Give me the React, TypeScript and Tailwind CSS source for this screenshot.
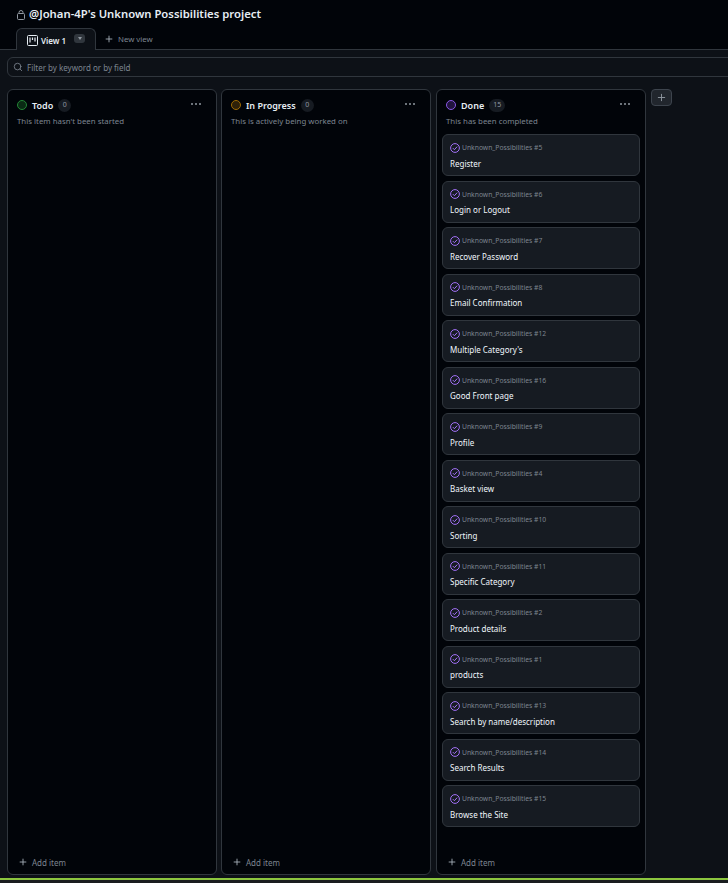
import { Plus, Search } from "lucide-react";

interface IColumn {
  title: string;
  count: number;
  note: string;
  ring: string;
  fill: string;
}

const items = [
  { num: 5, title: "Register" },
  { num: 6, title: "Login or Logout" },
  { num: 7, title: "Recover Password" },
  { num: 8, title: "Email Confirmation" },
  { num: 12, title: "Multiple Category's" },
  { num: 16, title: "Good Front page" },
  { num: 9, title: "Profile" },
  { num: 4, title: "Basket view" },
  { num: 10, title: "Sorting" },
  { num: 11, title: "Specific Category" },
  { num: 2, title: "Product details" },
  { num: 1, title: "products" },
  { num: 13, title: "Search by name/description" },
  { num: 14, title: "Search Results" },
  { num: 15, title: "Browse the Site" },
];

const columns: IColumn[] = [
  { title: "Todo", count: 0, note: "This item hasn't been started", ring: "border-[#238636]", fill: "bg-[#0a2a14]" },
  { title: "In Progress", count: 0, note: "This is actively being worked on", ring: "border-[#9e6a03]", fill: "bg-[#2e2109]" },
  { title: "Done", count: 15, note: "This has been completed", ring: "border-[#8957e5]", fill: "bg-[#21143f]" },
];

const Dots = () => (
  <svg width="12" height="4" viewBox="0 0 12 4" className="text-[#9198a1]">
    <circle cx="2" cy="2" r="1" fill="currentColor" />
    <circle cx="6" cy="2" r="1" fill="currentColor" />
    <circle cx="10" cy="2" r="1" fill="currentColor" />
  </svg>
);

const DoneIcon = () => (
  <svg width="10" height="10" viewBox="0 0 10 10" fill="none" className="shrink-0 -translate-y-px">
    <circle cx="5" cy="5" r="4.4" stroke="#a371f7" strokeWidth="1" />
    <path d="M2.8 5.1 4.4 6.7 7.2 3.6" stroke="#a371f7" strokeWidth="1" />
  </svg>
);

const BoardIcon = () => (
  <svg width="11" height="11" viewBox="0 0 11 11" fill="none" className="shrink-0">
    <rect x="0.5" y="0.5" width="10" height="10" rx="1" stroke="#e6edf3" />
    <path d="M3 2.5v5M5.5 2.5v2.5M8 2.5v4" stroke="#e6edf3" strokeWidth="1.2" />
  </svg>
);

const Card = ({ num, title }: { num: number; title: string }) => (
  <div className="h-[42px] shrink-0 rounded-md border border-[#30363d] bg-[#161b22] pl-[7px] pt-[7px]">
    <div className="flex h-[13px] items-center gap-[2px] text-[6.75px] text-[#7d8590]">
      <DoneIcon />
      <span>Unknown_Possibilities #{num}</span>
    </div>
    <div className="mt-[1.5px] text-[8px] leading-[13px] font-normal text-[#f0f6fc]">{title}</div>
  </div>
);

const Column = ({ col, cards }: { col: IColumn; cards: boolean }) => (
  <div className={`flex h-[786px] w-[210px] shrink-0 flex-col rounded-md border border-[#30363d] bg-[#010409] ${cards ? "ml-px" : ""}`}>
    <div className="flex h-[44px] shrink-0 flex-col px-[9px] pt-[8px]">
      <div className="flex h-[14px] items-center">
        <span className={`h-[10px] w-[10px] rounded-full border-[1.5px] ${col.ring} ${col.fill}`} />
        <span className="ml-[5px] translate-y-px text-[9px] font-semibold text-[#e6edf3]">{col.title}</span>
        <span className="ml-[5px] flex h-[13px] min-w-[13px] items-center justify-center rounded-full bg-[#161b22] px-[4px] text-[7px] text-[#9198a1]">
          {col.count}
        </span>
        <span className="mr-[5px] ml-auto -translate-y-[1px]"><Dots /></span>
      </div>
      <p className="mt-[3px] text-[7.85px] leading-[12px] text-[#7d8590]">{col.note}</p>
    </div>
    <div className="flex flex-1 flex-col gap-[4.5px] px-[5px]">
      {cards && items.map((it) => <Card key={it.num} num={it.num} title={it.title} />)}
    </div>
    <div className="flex h-[26px] shrink-0 items-center gap-[4px] px-[10px] pt-[4px] text-[8px] text-[#7d8590]">
      <Plus size={10} className="-translate-y-px text-[#b1bac4]" />
      <span>Add item</span>
    </div>
  </div>
);

export default function App() {
  return (
    <div className="flex h-[883px] w-[728px] flex-col overflow-hidden bg-[#0d1117] font-['Noto_Sans',sans-serif]">
      <div className="h-[50px] shrink-0 border-b border-[#30363d] bg-[#010409]">
        <div className="flex h-[29px] items-center pl-[17px]">
          <svg width="8" height="10" viewBox="0 0 8 10" fill="none">
            <rect x="0.5" y="3.5" width="7" height="6" rx="1" stroke="#9198a1" />
            <path d="M2 3.5V2.5a2 2 0 0 1 4 0v1" stroke="#9198a1" />
          </svg>
          <h1 className="ml-[4px] text-[11.3px] font-semibold text-[#e6edf3]">@Johan-4P's Unknown Possibilities project</h1>
        </div>
        <div className="flex h-[20px] items-end pl-[16px]">
          <div className="relative top-px flex h-[22px] w-[80px] shrink-0 items-center rounded-t-md border border-b-0 border-[#30363d] bg-[#0d1117] pl-[10px] pt-[2px]">
            <BoardIcon />
            <span className="ml-[3px] text-[8px] font-semibold text-[#e6edf3]">View 1</span>
            <span className="ml-[8px] flex h-[9px] w-[11px] -translate-y-[2px] items-center justify-center rounded-[3px] bg-[#30363d]">
              <span className="h-0 w-0 border-x-[2.5px] border-t-[3px] border-x-transparent border-t-[#9198a1]" />
            </span>
          </div>
          <div className="flex h-[20px] items-center pl-[8px] pt-[2px] text-[7.8px] text-[#7d8590]">
            <Plus size={10} className="-translate-y-px text-[#b1bac4]" />
            <span className="ml-[4px]">New view</span>
          </div>
        </div>
      </div>
      <div className="px-[7px] pt-[7px]">
        <div className="-mr-[14px] flex h-[20px] items-center rounded-md border border-[#30363d] pl-[5px] text-[8px] text-[#7d8590]">
          <Search size={10} />
          <span className="ml-[4px] translate-y-px">Filter by keyword or by field</span>
        </div>
      </div>
      <div className="flex gap-[4px] px-[7px] pt-[12px]">
        {columns.map((c) => (
          <Column key={c.title} col={c} cards={c.title === "Done"} />
        ))}
        <div className="ml-px flex h-[17px] w-[21px] items-center justify-center rounded-[4px] border border-[#3d444d] bg-[#21262d] text-[#9198a1]">
          <Plus size={11} />
        </div>
      </div>
      <div className="mt-[3px] h-[2px] shrink-0 bg-[#8cc63f]" />
      <div className="flex-1 bg-[#1a1d1f]" />
    </div>
  );
}
